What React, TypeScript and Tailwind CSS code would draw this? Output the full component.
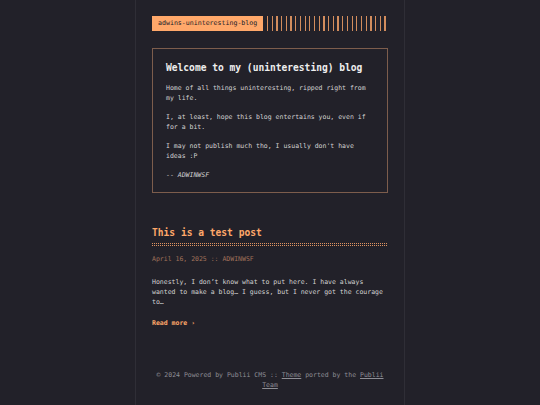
import React from "react";

export default function App() {
  const mono = { fontFamily: '"DejaVu Sans Mono", "Liberation Mono", monospace' };
  const dots = "repeating-linear-gradient(90deg, #ffa86a 0, #ffa86a 1px, transparent 1px, transparent 2px)";
  return (
    <div className="min-h-[405px] w-full bg-[#222129] text-[#d6d6d6] antialiased" style={mono}>
      <div className="mx-auto w-[270px] min-h-[405px] border-x border-[#2f2e36] px-[16px] pt-[16px]">
        <header className="flex items-center gap-[4px] h-[15px]">
          <div className="bg-[#ffa86a] text-[#222129] text-[6.6px] h-[15px] px-[6px] flex items-center leading-none">
            adwins-uninteresting-blog
          </div>
          <div
            className="flex-1 h-[15px]"
            style={{
              background:
                "repeating-linear-gradient(90deg, #ffa86a 0, #ffa86a 1.2px, transparent 1.2px, transparent 4.7px)",
              opacity: 0.8,
            }}
          />
        </header>

        <section className="mt-[17px] border border-[#7d5d4c] px-[13px] pt-[12px] pb-[9px]">
          <h1 className="text-[9.6px] font-bold text-[#eeeeee] leading-[14px] mb-[8px]">
            Welcome to my (uninteresting) blog
          </h1>
          <div className="text-[6.5px] leading-[10px] text-[#d2d2d2]">
            <p className="mb-[9px]">Home of all things uninteresting, ripped right from my life.</p>
            <p className="mb-[9px]">I, at least, hope this blog entertains you, even if for a bit.</p>
            <p className="mb-[9px]">I may not publish much tho, I usually don't have ideas :P</p>
            <p className="mb-[3px]">
              -- <em>ADWINWSF</em>
            </p>
          </div>
        </section>

        <article className="mt-[33px]">
          <h2 className="text-[9.6px] font-bold text-[#ffa86a] leading-[14px]">This is a test post</h2>
          <div className="mt-[3px] flex flex-col gap-[1px] opacity-85">
            <div className="h-[1px]" style={{ background: dots }} />
            <div className="h-[1px]" style={{ background: dots }} />
          </div>
          <div className="mt-[8px] text-[6.5px] leading-[10px] text-[#a0715a]">April 16, 2025 :: ADWINWSF</div>
          <div className="mt-[13px] text-[6.5px] leading-[10px] text-[#d2d2d2]">
            Honestly, I don’t know what to put here. I have always wanted to make a blog… I guess, but I never got the courage to…
          </div>
          <div className="mt-[11px] text-[6.5px] leading-[10px] font-bold text-[#ffa86a]">Read more ›</div>
        </article>

        <footer className="mt-[42px] text-center text-[6.5px] leading-[10px] text-[#8d8d94] px-[2px]">
          © 2024 Powered by Publii CMS :: <span className="underline">Theme</span> ported by the{" "}
          <span className="underline">Publii Team</span>
        </footer>
      </div>
    </div>
  );
}
